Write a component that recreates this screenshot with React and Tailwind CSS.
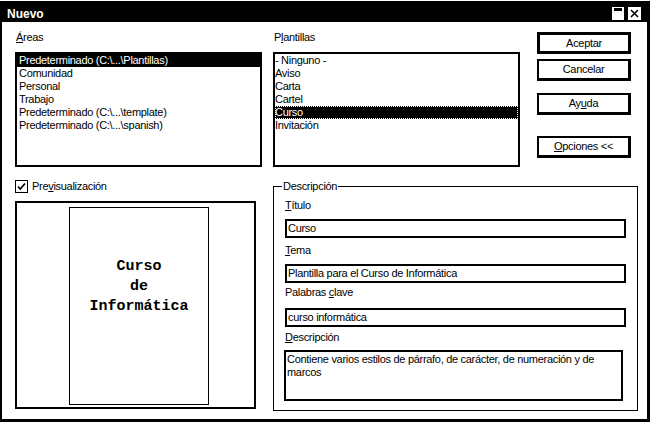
import React from "react";

const ui = "font-['Liberation_Sans',Arial,sans-serif] text-[11px] leading-[13px] tracking-[-0.3px] text-black";

const areas = [
  "Predeterminado (C:\\...\\Plantillas)",
  "Comunidad",
  "Personal",
  "Trabajo",
  "Predeterminado (C:\\...\\template)",
  "Predeterminado (C:\\...\\spanish)",
];

const plantillas = ["- Ninguno -", "Aviso", "Carta", "Cartel", "Curso", "Invitación"];

function U({ children }) {
  return <span className="underline decoration-1 underline-offset-[1px]">{children}</span>;
}

function Button({ children, primary }) {
  return (
    <button
      className={
        primary
          ? "flex h-[22px] w-[94px] items-center justify-center border-[3px] border-black bg-white"
          : "flex h-[22px] w-[94px] items-center justify-center border-2 border-r-[3px] border-b-[3px] border-black bg-white"
      }
    >
      {children}
    </button>
  );
}

function Field({ value }) {
  return (
    <div className="flex h-[19px] w-[341px] items-center border-2 border-black bg-white pl-[1px]">
      {value}
    </div>
  );
}

export default function App() {
  return (
    <div className={`h-[422px] w-[650px] bg-white pt-[1px] ${ui}`}>
      <div className="flex h-[421px] flex-col border-b-[3px] border-l-2 border-r-[3px] border-black bg-white">
        {/* title bar */}
        <div className="flex h-[21px] items-start justify-between bg-black pl-[5px] pr-[6px] pt-[6px]">
          <span className="text-[12px] leading-[14px] font-bold tracking-normal text-white">Nuevo</span>
          <div className="flex gap-[4px]">
            <div className="h-[13px] w-[12px] bg-white px-[2px] pt-[1px]">
              <div className="h-[3px] bg-black" />
            </div>
            <div className="flex h-[13px] w-[13px] items-center justify-center bg-white">
              <svg width="9" height="9" viewBox="0 0 9 9">
                <path d="M1 1 L8 8 M8 1 L1 8" stroke="black" strokeWidth="1.6" />
              </svg>
            </div>
          </div>
        </div>

        <div className="pl-[13px]">
          {/* top row */}
          <div className="flex">
            <div className="w-[247px]">
              <div className="mt-[9px] mb-[8px] pl-[1px]">
                <U>Á</U>reas
              </div>
              <div className="h-[115px] border-2 border-black bg-white">
                {areas.map((a, i) => (
                  <div
                    key={a}
                    className={i === 0 ? "h-[13px] bg-black pl-[2px] text-white" : "h-[13px] pl-[2px]"}
                  >
                    {a}
                  </div>
                ))}
              </div>
            </div>

            <div className="ml-[11px] w-[247px]">
              <div className="mt-[9px] mb-[8px] pl-[1px]">
                P<U>l</U>antillas
              </div>
              <div className="h-[115px] border-2 border-black bg-white">
                {plantillas.map((p, i) => (
                  <div
                    key={p}
                    className={
                      i === 4
                        ? "h-[13px] bg-black text-white outline-1 outline-dotted outline-white -outline-offset-1"
                        : "h-[13px]"
                    }
                  >
                    {p}
                  </div>
                ))}
              </div>
            </div>

            <div className="ml-[17px] flex w-[94px] flex-col pt-[10px]">
              <Button primary>Aceptar</Button>
              <div className="mt-[5px]">
                <Button>Cancelar</Button>
              </div>
              <div className="mt-[12px]">
                <Button>
                  Ay<U>u</U>da
                </Button>
              </div>
              <div className="mt-[21px]">
                <Button>
                  <U>O</U>pciones &lt;&lt;
                </Button>
              </div>
            </div>
          </div>

          {/* bottom row */}
          <div className="flex">
            <div className="w-[241px]">
              <div className="mt-[13px] flex h-[13px] items-center">
                <div className="flex h-[13px] w-[13px] items-center justify-center border border-black">
                  <svg width="11" height="11" viewBox="0 0 11 11">
                    <path d="M2 5.5 L4.3 8 L9 2.5" stroke="black" strokeWidth="1.7" fill="none" />
                  </svg>
                </div>
                <span className="ml-[4px]">
                  Pre<U>v</U>isualización
                </span>
              </div>
              <div className="mt-[8px] h-[208px] border-2 border-black bg-white pt-[4px]">
                <div className="ml-[52px] h-[198px] w-[140px] border border-black pt-[49px] text-center font-['Liberation_Mono','Courier_New',monospace] text-[15px] leading-[20px] font-bold tracking-normal">
                  <div>Curso</div>
                  <div>de</div>
                  <div>Informática</div>
                </div>
              </div>
            </div>

            <fieldset className="mt-[13px] ml-[17px] h-[231px] w-[365px] border border-black px-0">
              <legend className="ml-[8px] px-[1px] leading-[13px]">Descripción</legend>
              <div className="px-[11px]">
                <div className="mt-[6px] h-[13px]">
                  <U>T</U>ítulo
                </div>
                <div className="mt-[7px]">
                  <Field value="Curso" />
                </div>
                <div className="mt-[6px] h-[13px]">
                  <U>T</U>ema
                </div>
                <div className="mt-[7px]">
                  <Field value="Plantilla para el Curso de Informática" />
                </div>
                <div className="mt-[3px] h-[13px]">
                  Palabras <U>c</U>lave
                </div>
                <div className="mt-[9px]">
                  <Field value="curso informática" />
                </div>
                <div className="mt-[4px] h-[13px]">
                  <U>D</U>escripción
                </div>
                <div className="mt-[6px] -ml-[1px] h-[51px] w-[339px] border-2 border-black bg-white pl-[1px] pt-[1px]">
                  Contiene varios estilos de párrafo, de carácter, de numeración y de
                  <br />
                  marcos
                </div>
              </div>
            </fieldset>
          </div>
        </div>
      </div>
    </div>
  );
}
